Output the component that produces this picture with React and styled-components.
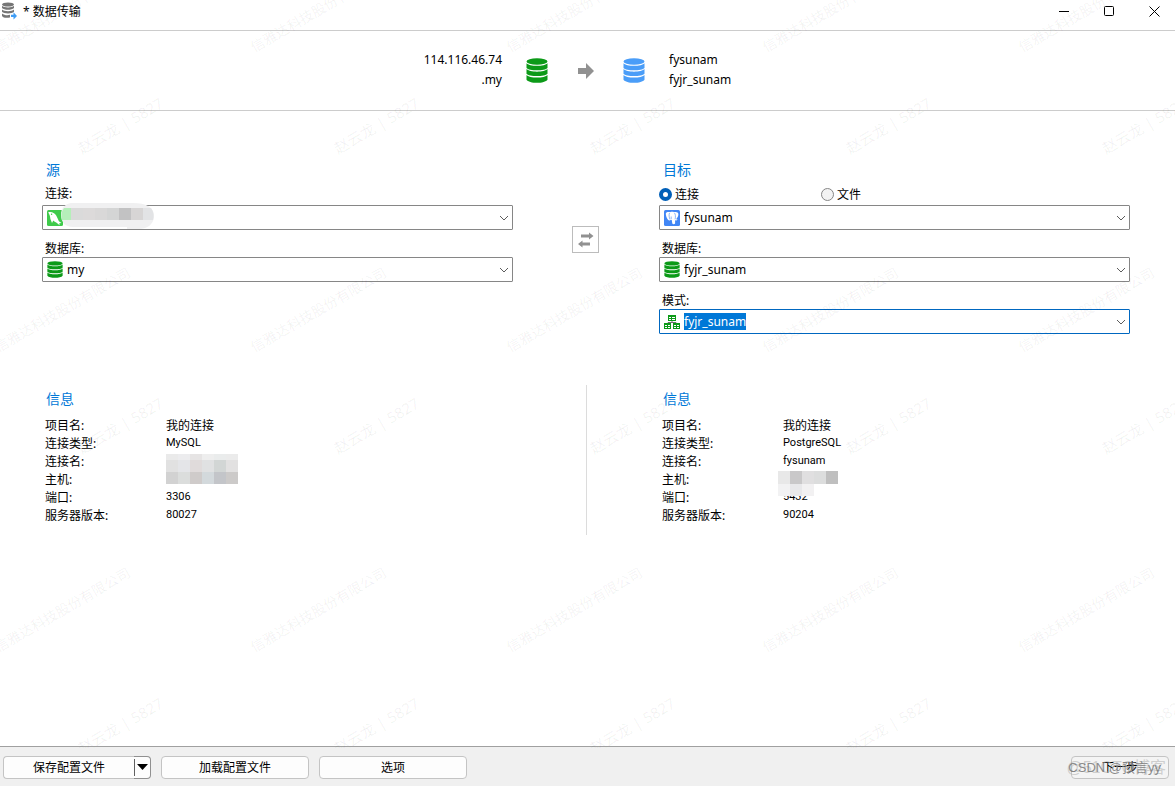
import { useState } from 'react';
import styled, { createGlobalStyle } from 'styled-components';

const GlobalStyle = createGlobalStyle`
  * {
    box-sizing: border-box;
  }
  body {
    margin: 0;
    background: #ffffff;
    color: #000000;
    font-family: "Noto Sans", "Noto Sans CJK SC", sans-serif;
    font-size: 12px;
  }
  button, input, select {
    font: inherit;
    color: inherit;
    margin: 0;
    padding: 0;
  }
`

const Window = styled.div`
  position: relative;
  min-height: 100vh;
  display: flex;
  flex-direction: column;
  overflow: hidden;
`
const TitleBar = styled.header`
  height: 31px;
  padding: 0 0 8px;
  display: flex;
  align-items: center;
  border-bottom: 1px solid #cccccc;
`
const Title = styled.h1`
  flex: 1;
  margin: 0 0 0 6px;
  font-size: 12px;
  font-weight: normal;
`
const WindowButtons = styled.div`
  display: flex;
  gap: 4px;
`
const WindowButton = styled.button`
  width: 41px;
  height: 22px;
  display: flex;
  align-items: center;
  justify-content: center;
  border: 0;
  background: transparent;
`
const Summary = styled.section`
  height: 80px;
  padding-right: 4px;
  display: grid;
  grid-template-columns: 1fr 167px 1fr;
  align-items: center;
  border-bottom: 1px solid #cccccc;
`
const SummaryText = styled.div`
  padding-bottom: 2px;
  line-height: 20px;
  text-align: ${({ $align }) => $align};
`
const SummaryIcons = styled.div`
  padding: 0 24px;
  display: flex;
  align-items: center;
  justify-content: space-between;
`
const Content = styled.main`
  flex: 1;
  padding: 49px 45px 32px 42px;
  display: grid;
  grid-template-columns: 1fr 146px 1fr;
  align-content: start;
  row-gap: 51px;
`
const Heading = styled.h2`
  height: 20px;
  margin: 0;
  padding-left: 4px;
  color: #0078d7;
  font-size: 14px;
  font-weight: normal;
  line-height: 20px;
`
const LabelRow = styled.div`
  height: 25px;
  padding-left: 3px;
  display: flex;
  align-items: center;
`
const FieldLabel = styled.label`
  display: block;
  padding-left: 3px;
  margin-top: 11px;
  line-height: 16px;
`
const RadioRow = styled.div`
  height: 25px;
  padding-top: 3px;
  display: grid;
  grid-template-columns: 162px 1fr;
  align-items: center;
`
const RadioLabel = styled.label`
  display: flex;
  align-items: center;
  gap: 3px;
`
const Radio = styled.input`
  appearance: none;
  width: 13px;
  height: 13px;
  border: 1px solid #868686;
  border-radius: 50%;
  background: #f3f3f3;

  &:checked {
    border: 4px solid #005fb8;
    background: #ffffff;
  }
`
const ComboFrame = styled.div`
  position: relative;
  height: 25px;
  padding: 0 3px 0 4px;
  display: flex;
  align-items: center;
  gap: 4px;
  border: 1px solid ${({ $active }) => ($active ? '#0067c0' : '#868686')};
  border-radius: 1px;
`
const ComboValue = styled.div`
  flex: 1;
  display: flex;
  padding-bottom: 1px;
`
const Select = styled.select`
  flex: ${({ $active }) => ($active ? 'none' : 1)};
  field-sizing: ${({ $active }) => ($active ? 'content' : 'fixed')};
  height: 17px;
  appearance: none;
  border: 0;
  outline: 0;
  line-height: 17px;
  color: ${({ $active }) => ($active ? '#ffffff' : '#000000')};
  background: ${({ $active }) => ($active ? '#0078d7' : 'transparent')};
`
const ComboMask = styled.div`
  position: absolute;
  top: -4px;
  left: 18px;
  line-height: 0;
`
const SwapButton = styled.button`
  width: 27px;
  height: 27px;
  margin-top: 66px;
  margin-right: 1px;
  justify-self: center;
  display: flex;
  align-items: center;
  justify-content: center;
  border: 1px solid #bcbcbc;
  background: #ffffff;
`
const Divider = styled.div`
  width: 1px;
  height: 150px;
  justify-self: center;
  background: #dcdcdc;
`
const InfoPanel = styled.section`
  padding-top: 4px;
`
const InfoList = styled.dl`
  margin: 8px 0 0;
  padding-left: 3px;
  display: grid;
  grid-template-columns: 121px 1fr;
  grid-auto-rows: 18px;
  line-height: 18px;
`
const InfoName = styled.dt``
const InfoValue = styled.dd`
  position: relative;
  margin: 0;
  font-family: ${({ $small }) => ($small ? 'Roboto, ' : '')}"Noto Sans", "Noto Sans CJK SC", sans-serif;
  font-size: ${({ $small }) => ($small ? 11 : 12)}px;
  line-height: ${({ $small }) => ($small ? 16 : 18)}px;
`
const InfoMask = styled.div`
  position: absolute;
  top: ${({ $top }) => $top}px;
  left: ${({ $left }) => $left}px;
  z-index: 1;
  line-height: 0;
`
const Footer = styled.footer`
  position: relative;
  height: 40px;
  padding: 2px 6px 0 3px;
  display: flex;
  align-items: center;
  gap: 10px;
  border-top: 1px solid #a0a0a0;
  background: #f0f0f0;
`
const FooterButton = styled.button`
  width: ${({ $width }) => $width || 148}px;
  height: 23px;
  padding-bottom: 2px;
  border: 1px solid #c4c4c4;
  border-radius: 4px;
  background: ${({ $flat }) => ($flat ? '#f4f4f4' : '#fdfdfd')};
`
const SplitButton = styled.div`
  width: 148px;
  display: flex;
`
const SplitMain = styled(FooterButton)`
  flex: 1;
  border-right: 0;
  border-radius: 4px 0 0 4px;
`
const SplitArrow = styled.button`
  width: 17px;
  height: 23px;
  display: flex;
  align-items: center;
  border: 1px solid #909090;
  border-left: 0;
  border-radius: 0 4px 4px 0;
  background: #fdfdfd;
`
const Spacer = styled.div`
  flex: 1;
`
const Credit = styled.span`
  position: absolute;
  right: ${({ $right }) => $right}px;
  top: 11px;
  color: ${({ $color }) => $color};
  font-family: "Liberation Sans", "Noto Sans CJK SC", sans-serif;
  font-size: ${({ $size }) => $size}px;
  line-height: 20px;
  white-space: nowrap;
  pointer-events: none;
`
const WatermarkLayer = styled.div`
  position: absolute;
  inset: 0 0 38px;
  display: grid;
  grid-template-columns: repeat(8, 256px);
  grid-auto-rows: 300px;
  overflow: hidden;
  pointer-events: none;
`
const WatermarkTile = styled.div`
  position: relative;
`
const WatermarkText = styled.span`
  position: absolute;
  left: ${({ $x }) => $x}px;
  top: ${({ $y }) => $y}px;
  transform: translate(-50%, -50%) rotate(-30deg);
  color: rgba(0, 0, 0, 0.06);
  font-size: ${({ $size }) => $size}px;
  white-space: nowrap;
`

const DatabaseIcon = ({ color, width, height }) => (
  <svg width={width} height={height} viewBox="0 0 22 25" preserveAspectRatio="none" fill={color}>
    <ellipse cx="11" cy="3.5" rx="10.5" ry="3.3" />
    <path d="M.5 5.200C3 8.600 19 8.600 21.500 5.200V9.900C19 13.100 3 13.100 .5 9.900Z" />
    <path d="M.5 11.100C3 14.500 19 14.500 21.500 11.100V15.700C19 18.900 3 18.900 .5 15.700Z" />
    <path d="M.5 16.900C3 20.300 19 20.300 21.500 16.900V21.700C19 25.800 3 25.800 .5 21.700Z" />
  </svg>
)

const TransferIcon = () => (
  <svg width="17" height="18" viewBox="0 0 17 18">
    <g fill="#757575">
      <ellipse cx="8" cy="2.500" rx="6" ry="2" />
      <path d="M2 3.800C4 6 12 6 14 3.800V6C12 8.400 4 8.400 2 6Z" />
      <path d="M2 7.500C4 9.700 12 9.700 14 7.500V9.800C12 12 4 12 2 9.800Z" />
      <path d="M2 11.400C4 13.400 8 13.400 10 12.800V15.400C7 16.200 3 16 2 14Z" />
    </g>
    <path d="M11 12.800h2.500V10.300L17 13.900l-3.500 3.600V15H11z" fill="#3f9df5" />
  </svg>
)

const ArrowIcon = () => (
  <svg width="16" height="16" viewBox="0 0 16 16" fill="#919191">
    <path d="M0 5h8V0l8 8-8 8v-5H0z" />
  </svg>
)

const SwapIcon = () => (
  <svg width="16" height="16" viewBox="0 0 16 16" fill="#919191">
    <path d="M3 2.500h8V.5L15.500 4 11 7.500v-2H3zM12 10.500H4.500v-2L0 12l4.500 3.500v-2H12z" />
  </svg>
)

const MysqlIcon = () => (
  <svg width="16" height="16" viewBox="0 0 16 16">
    <rect width="16" height="16" rx="1.500" fill="#3fca4b" />
    <path d="M1.200 2.200C4.500 1.400 7.500 2.600 9.200 5.500c1 1.900 2 4 2.700 5.800l2.600 1.800-2.200.1.300 2-2.700-2.200C8.300 12.300 7.200 11.600 6.300 10.600L5 13 3.400 9C3.200 6.300 2.600 4.700 1.200 2.200Z" fill="#fff" />
    <circle cx="4.600" cy="4.300" r=".7" fill="#3fca4b" />
  </svg>
)

const PostgresIcon = () => (
  <svg width="16" height="16" viewBox="0 0 16 16">
    <rect width="16" height="16" rx="1.500" fill="#4186f5" />
    <path d="M1.800 3.500C2.500 1.700 5 1.900 6 2.300c1.300-.6 3-.6 4 0 2-.8 4.400 0 4.400 2 0 1.900-1.200 3.700-2.400 5l1.700.2c-.6 1-1.800 1.100-2.600.8V13.500c-.6.900-2.300.9-2.800 0L7.700 9.800 6 10.300C4 11.500 1.800 6.500 1.800 3.500Z" fill="#fff" />
    <path d="M5.500 3C4.700 5 5.200 7.600 6 9.500M10.500 3c1 1.200 1.200 3.500.6 6.300M7.200 6.500V9" stroke="#4186f5" strokeWidth=".6" fill="none" />
  </svg>
)

const SchemaIcon = () => (
  <svg width="16" height="16" viewBox="0 0 16 16">
    <path d="M8 6v3M4 10V8.500h8V10" stroke="#707070" fill="none" />
    <path d="M4 1h8v6H4zM0 9h7v6H0zM9 9h7v6H9z" fill="#0c9a18" />
    <path d="M5 3h2v1H5zM8 3h3v1H8zM5 5h2v1H5zM8 5h3v1H8zM1 11h2v1H1zM4 11h2v1H4zM1 13h2v1H1zM4 13h2v1H4zM10 11h2v1h-2zM13 11h2v1h-2zM10 13h2v1h-2zM13 13h2v1h-2z" fill="#fff" />
  </svg>
)

const ChevronIcon = () => (
  <svg width="10" height="6" viewBox="0 0 10 6">
    <path d="M1 1l4 4 4-4" stroke="#5c5c5c" fill="none" />
  </svg>
)

const Cells = ({ colors, y, height = 12, x = 0 }) =>
  colors.map((color, i) => (
    <rect key={i} x={x + i * 12} y={y} width="12" height={height} fill={color} />
  ))

const ConnectionMask = () => (
  <svg width="93" height="28" viewBox="0 0 93 28">
    <path d="M10 1H72C85 1 93 5 93 14S85 27 78 27H66V25H12C4 25 0 20 0 13S4 2 10 1Z" fill="#f0f0f1" />
    <path d="M3 6H10V18H1C0 14 0 10 3 6Z" fill="#b5efb9" />
    <Cells x={10} y={6} colors={['#dadada', '#dcdada', '#d9d8d8', '#d4d5d5', '#c2c2c3', '#d7d5d5']} />
    <path d="M82 6h8c3 4 3 8 2 12H82z" fill="#e2e3e5" />
  </svg>
)

const SourceMask = () => (
  <svg width="72" height="31" viewBox="0 0 72 31">
    <Cells y={0} height={6} colors={['#eaeaea', '#ececee', '#e6e4e4', '#eeeeee', '#eaecec', '#ebebeb']} />
    <Cells y={6} colors={['#e1e1e1', '#e4e5e8', '#e0dbdb', '#e0e1e2', '#d2d6d5', '#e2e1e1']} />
    <Cells y={18} colors={['#d2d2d2', '#dbdddc', '#cfcbca', '#d3d9dc', '#c3c5c9', '#cccac9']} />
  </svg>
)

const TargetMask = () => (
  <svg width="60" height="25" viewBox="0 0 60 25">
    <Cells y={0} height={13} colors={['#e8e8e8', '#c9c8c9', '#e0dfe0', '#dcdddd', '#bfbfbf']} />
    <Cells y={13} colors={['#f2f2f3', '#e8e8ea', '#f2f1f2']} />
  </svg>
)

const Combo = ({ id, value, icon, active, mask, label }) => (
  <ComboFrame $active={active}>
    {icon}
    <ComboValue>
      <Select id={id} $active={active} aria-label={label} defaultValue={value}>
        <option value={value}>{value}</option>
      </Select>
    </ComboValue>
    <ChevronIcon />
    {mask && <ComboMask>{mask}</ComboMask>}
  </ComboFrame>
)

const Info = ({ rows }) => (
  <InfoPanel>
    <Heading>信息</Heading>
    <InfoList>
      {rows.map(([name, value, mask], i) => [
        <InfoName key={name}>{name}:</InfoName>,
        <InfoValue key={name + 'value'} $small={i > 0}>{value}{mask}</InfoValue>,
      ])}
    </InfoList>
  </InfoPanel>
)

const sourceInfo = [
  ['项目名', '我的连接'],
  ['连接类型', 'MySQL'],
  ['连接名', '', <InfoMask key="mask" $top={1} $left={0}><SourceMask /></InfoMask>],
  ['主机', ''],
  ['端口', '3306'],
  ['服务器版本', '80027'],
]

const targetInfo = [
  ['项目名', '我的连接'],
  ['连接类型', 'PostgreSQL'],
  ['连接名', 'fysunam'],
  ['主机', '', <InfoMask key="mask" $top={0} $left={-5}><TargetMask /></InfoMask>],
  ['端口', '5432'],
  ['服务器版本', '90204'],
]

const Watermark = () => (
  <WatermarkLayer aria-hidden="true">
    {Array.from({ length: 24 }, (_, i) => (
      <WatermarkTile key={i}>
        <WatermarkText $x={62} $y={9} $size={14}>信雅达科技股份有限公司</WatermarkText>
        <WatermarkText $x={120} $y={125} $size={15}>赵云龙 | 5827</WatermarkText>
      </WatermarkTile>
    ))}
  </WatermarkLayer>
)

const App = () => {
  const [target, setTarget] = useState('connection')
  const dbIcon = <DatabaseIcon color="#0c9a18" width={16} height={17} />

  return (
    <Window>
      <GlobalStyle />
      <TitleBar>
        <TransferIcon />
        <Title>* 数据传输</Title>
        <WindowButtons>
          <WindowButton aria-label="最小化">
            <svg width="11" height="11"><path d="M0 5.500h10" stroke="#000" /></svg>
          </WindowButton>
          <WindowButton aria-label="最大化">
            <svg width="11" height="11"><rect x=".5" y=".5" width="9" height="9" rx="1" fill="none" stroke="#000" /></svg>
          </WindowButton>
          <WindowButton aria-label="关闭">
            <svg width="11" height="11"><path d="M.5 .5l10 10M10.500 .5l-10 10" stroke="#000" /></svg>
          </WindowButton>
        </WindowButtons>
      </TitleBar>

      <Summary>
        <SummaryText $align="right">
          <div>114.116.46.74</div>
          <div>.my</div>
        </SummaryText>
        <SummaryIcons>
          <DatabaseIcon color="#0c9a18" width={22} height={25} />
          <ArrowIcon />
          <DatabaseIcon color="#4a9df8" width={22} height={25} />
        </SummaryIcons>
        <SummaryText $align="left">
          <div>fysunam</div>
          <div>fyjr_sunam</div>
        </SummaryText>
      </Summary>

      <Content>
        <section>
          <Heading>源</Heading>
          <LabelRow><label htmlFor="source-connection">连接:</label></LabelRow>
          <Combo id="source-connection" value="" icon={<MysqlIcon />} mask={<ConnectionMask />} />
          <FieldLabel htmlFor="source-database">数据库:</FieldLabel>
          <Combo id="source-database" value="my" icon={dbIcon} />
        </section>
        <SwapButton aria-label="交换"><SwapIcon /></SwapButton>
        <section>
          <Heading>目标</Heading>
          <RadioRow>
            <RadioLabel>
              <Radio type="radio" name="target" checked={target === 'connection'} onChange={() => setTarget('connection')} />
              连接
            </RadioLabel>
            <RadioLabel>
              <Radio type="radio" name="target" checked={target === 'file'} onChange={() => setTarget('file')} />
              文件
            </RadioLabel>
          </RadioRow>
          <Combo label="连接" value="fysunam" icon={<PostgresIcon />} />
          <FieldLabel htmlFor="target-database">数据库:</FieldLabel>
          <Combo id="target-database" value="fyjr_sunam" icon={dbIcon} />
          <FieldLabel htmlFor="target-schema">模式:</FieldLabel>
          <Combo id="target-schema" value="fyjr_sunam" icon={<SchemaIcon />} active />
        </section>

        <Info rows={sourceInfo} />
        <Divider />
        <Info rows={targetInfo} />
      </Content>

      <Footer>
        <SplitButton>
          <SplitMain>保存配置文件</SplitMain>
          <SplitArrow aria-label="更多">
            <svg width="15" height="17"><path d="M.5 0v17" stroke="#606060" /><path d="M3 5h11L8.500 11z" /></svg>
          </SplitArrow>
        </SplitButton>
        <FooterButton>加载配置文件</FooterButton>
        <FooterButton>选项</FooterButton>
        <Spacer />
        <FooterButton $width={98} $flat>下一步</FooterButton>
        <Credit $right={9} $color="rgba(180, 180, 180, 0.6)" $size={16}>@51CTO博客</Credit>
        <Credit $right={14} $color="rgba(110, 110, 110, 0.8)" $size={13}>CSDN @预言yy</Credit>
      </Footer>
      <Watermark />
    </Window>
  );
}

export default App
